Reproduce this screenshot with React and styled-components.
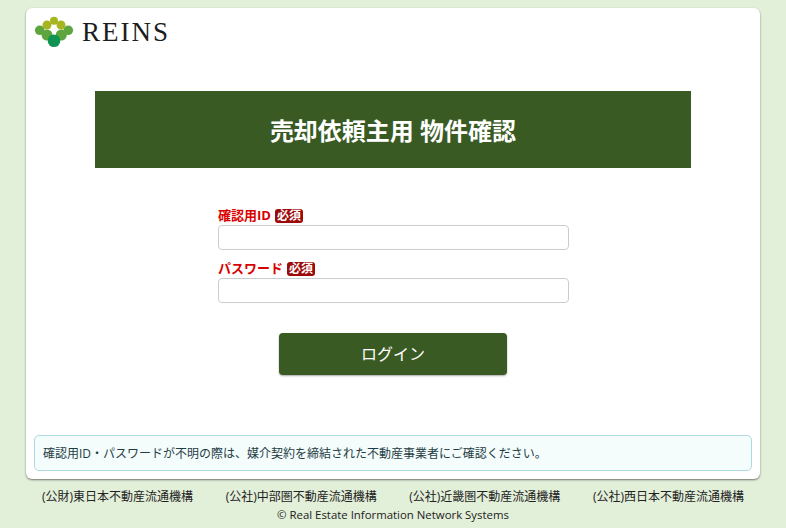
import React from 'react'
import styled, { createGlobalStyle } from 'styled-components'

const GlobalStyle = createGlobalStyle`
  * { box-sizing: border-box; }
  html, body { margin: 0; padding: 0; }
  body {
    background: #e2efd9;
    color: #212529;
    font-family: "Open Sans", "Noto Sans CJK JP", sans-serif;
  }
`

const Page = styled.div`
  width: 786px;
  height: 528px;
  padding-top: 8px;
  overflow: hidden;
`

const Card = styled.main`
  width: 734px;
  height: 471px;
  margin-left: 26px;
  padding: 8px;
  background: #fff;
  border-radius: 6px;
  box-shadow: 0 1px 2px rgba(0, 0, 0, 0.5);
  display: flex;
  flex-direction: column;
`

const Brand = styled.header`
  height: 35px;
  display: flex;
  align-items: flex-start;
  gap: 8px;
`

const LogoText = styled.span`
  font-family: "Liberation Serif", serif;
  font-size: 27px;
  letter-spacing: 2px;
  line-height: 1;
  color: #1c1c1c;
  margin-top: 3px;
`

const Banner = styled.h1`
  width: 596px;
  height: 77px;
  margin: 40px 0 0 61px;
  background: #3a5a23;
  color: #fff;
  font-size: 24px;
  font-weight: 700;
  display: flex;
  align-items: center;
  justify-content: center;
`

const Form = styled.form`
  width: 351px;
  margin: 40px 0 0 184px;
  display: flex;
  flex-direction: column;
  gap: 11px;
`

const Field = styled.div`
  display: flex;
  flex-direction: column;
`

const LabelRow = styled.label`
  height: 17px;
  padding-bottom: 2px;
  display: flex;
  align-items: center;
  gap: 4px;
  color: #d90000;
  font-size: 13px;
  font-weight: 700;
  line-height: 1;
`

const Required = styled.span`
  background: #9c0a0a;
  color: #fff;
  font-size: 12px;
  font-weight: 700;
  line-height: 14px;
  height: 14px;
  padding: 0 2px;
  border-radius: 3px;
`

const Input = styled.input`
  width: 100%;
  height: 25px;
  padding: 0 8px;
  background: #fff;
  border: 1px solid #c8cdd1;
  border-radius: 4px;
  outline: none;
`

const LoginButton = styled.button`
  width: 228px;
  height: 42px;
  margin: 19px 0 0 61px;
  padding: 0 0 2px;
  background: #3a5a23;
  color: #fff;
  border: none;
  border-radius: 4px;
  box-shadow: 0 1px 2px rgba(0, 0, 0, 0.35);
  font-family: inherit;
  font-size: 16px;
  display: flex;
  align-items: center;
  justify-content: center;
`

const Notice = styled.p`
  height: 36px;
  margin: auto 0 0;
  padding: 0 8px;
  background: #f4fcfc;
  border: 1px solid #aed9e0;
  border-radius: 5px;
  color: #1f3d44;
  font-size: 12px;
  display: flex;
  align-items: center;
`

const Footer = styled.footer`
  color: #222;
  text-align: center;
`

const Orgs = styled.div`
  display: flex;
  justify-content: space-between;
  width: 702px;
  margin: 9px 0 0 42px;
  font-size: 12px;
  line-height: 18px;
`

const Copyright = styled.div`
  font-size: 11.4px;
  line-height: 18px;
`

const Logo = () => (
  <svg width="40" height="35" viewBox="0 0 40 35" aria-hidden="true">
    <circle cx="20" cy="4.7" r="4" fill="#a6b520" />
    <circle cx="13" cy="9" r="4.5" fill="#a6b520" />
    <circle cx="27" cy="9" r="4.5" fill="#a6b520" />
    <circle cx="5.7" cy="14.3" r="4.8" fill="#5fa53f" />
    <circle cx="34.3" cy="14.3" r="4.8" fill="#5fa53f" />
    <circle cx="13" cy="19" r="5.5" fill="#5fa53f" />
    <circle cx="27.3" cy="19" r="5.5" fill="#5fa53f" />
    <circle cx="20" cy="24.7" r="6.3" fill="#0e9350" />
  </svg>
)

const orgs = [
  '(公財)東日本不動産流通機構',
  '(公社)中部圏不動産流通機構',
  '(公社)近畿圏不動産流通機構',
  '(公社)西日本不動産流通機構',
]

export default function App() {
  return (
    <Page>
      <GlobalStyle />
      <Card>
        <Brand>
          <Logo />
          <LogoText>REINS</LogoText>
        </Brand>
        <Banner>売却依頼主用 物件確認</Banner>
        <Form onSubmit={(e) => e.preventDefault()}>
          <Field>
            <LabelRow>
              確認用ID <Required>必須</Required>
            </LabelRow>
            <Input type="text" />
          </Field>
          <Field>
            <LabelRow>
              パスワード <Required>必須</Required>
            </LabelRow>
            <Input type="password" />
          </Field>
          <LoginButton>ログイン</LoginButton>
        </Form>
        <Notice>確認用ID・パスワードが不明の際は、媒介契約を締結された不動産事業者にご確認ください。</Notice>
      </Card>
      <Footer>
        <Orgs>
          {orgs.map((org) => (
            <span key={org}>{org}</span>
          ))}
        </Orgs>
        <Copyright>© Real Estate Information Network Systems</Copyright>
      </Footer>
    </Page>
  )
}
